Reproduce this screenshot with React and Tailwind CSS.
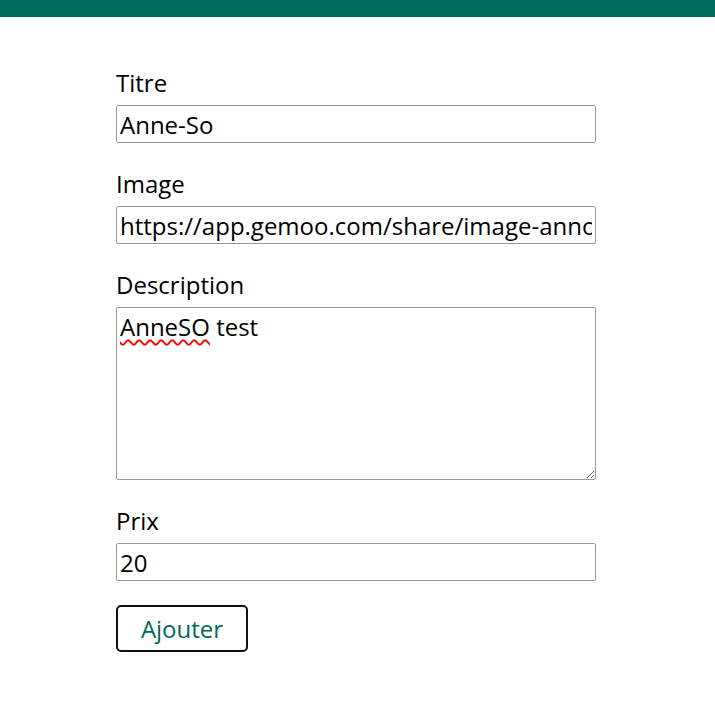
export default function App() {
    const font = { fontFamily: '"Open Sans", "Noto Sans", sans-serif' };
    return (
        <div className="min-h-[712px] bg-white text-black" style={font}>
            <div className="h-[17px] bg-[#00695c]" />
            <form className="w-[480px] ml-[116px] pt-[50px] flex flex-col" onSubmit={(e) => e.preventDefault()}>
                <label className="block text-[24px] leading-[32px] mb-[6px]">Titre</label>
                <input
                    className="h-[38px] w-full border border-[#999] rounded-[2px] px-[3px] text-[24px] outline-none mb-[25px]"
                    defaultValue="Anne-So"
                />
                <label className="block text-[24px] leading-[32px] mb-[6px]">Image</label>
                <input
                    className="h-[38px] w-full border border-[#999] rounded-[2px] px-[3px] text-[24px] outline-none mb-[25px]"
                    defaultValue="https://app.gemoo.com/share/image-annotation"
                />
                <label className="block text-[24px] leading-[32px] mb-[6px]">Description</label>
                <div className="relative mb-[25px]">
                    <textarea
                        className="block h-[173px] w-full border border-[#999] rounded-[2px] px-[3px] pt-[3px] pb-[2px] text-[24px] leading-[32px] outline-none"
                        spellCheck={false}
                        defaultValue="AnneSO test"
                    />
                    <span className="absolute left-[4px] top-[4px] text-[24px] leading-[32px] text-transparent underline decoration-wavy decoration-[#f00] decoration-[1.5px] underline-offset-[3px] pointer-events-none">
                        AnneSO
                    </span>
                </div>
                <label className="block text-[24px] leading-[32px] mb-[6px]">Prix</label>
                <input
                    className="h-[38px] w-full border border-[#999] rounded-[2px] px-[3px] text-[24px] outline-none mb-[24px]"
                    defaultValue="20"
                />
                <div>
                    <button
                        type="submit"
                        className="h-[47px] w-[132px] border-2 border-[#111] rounded-[5px] bg-white text-[#00695c] text-[24px]"
                    >
                        Ajouter
                    </button>
                </div>
            </form>
        </div>
    );
}
